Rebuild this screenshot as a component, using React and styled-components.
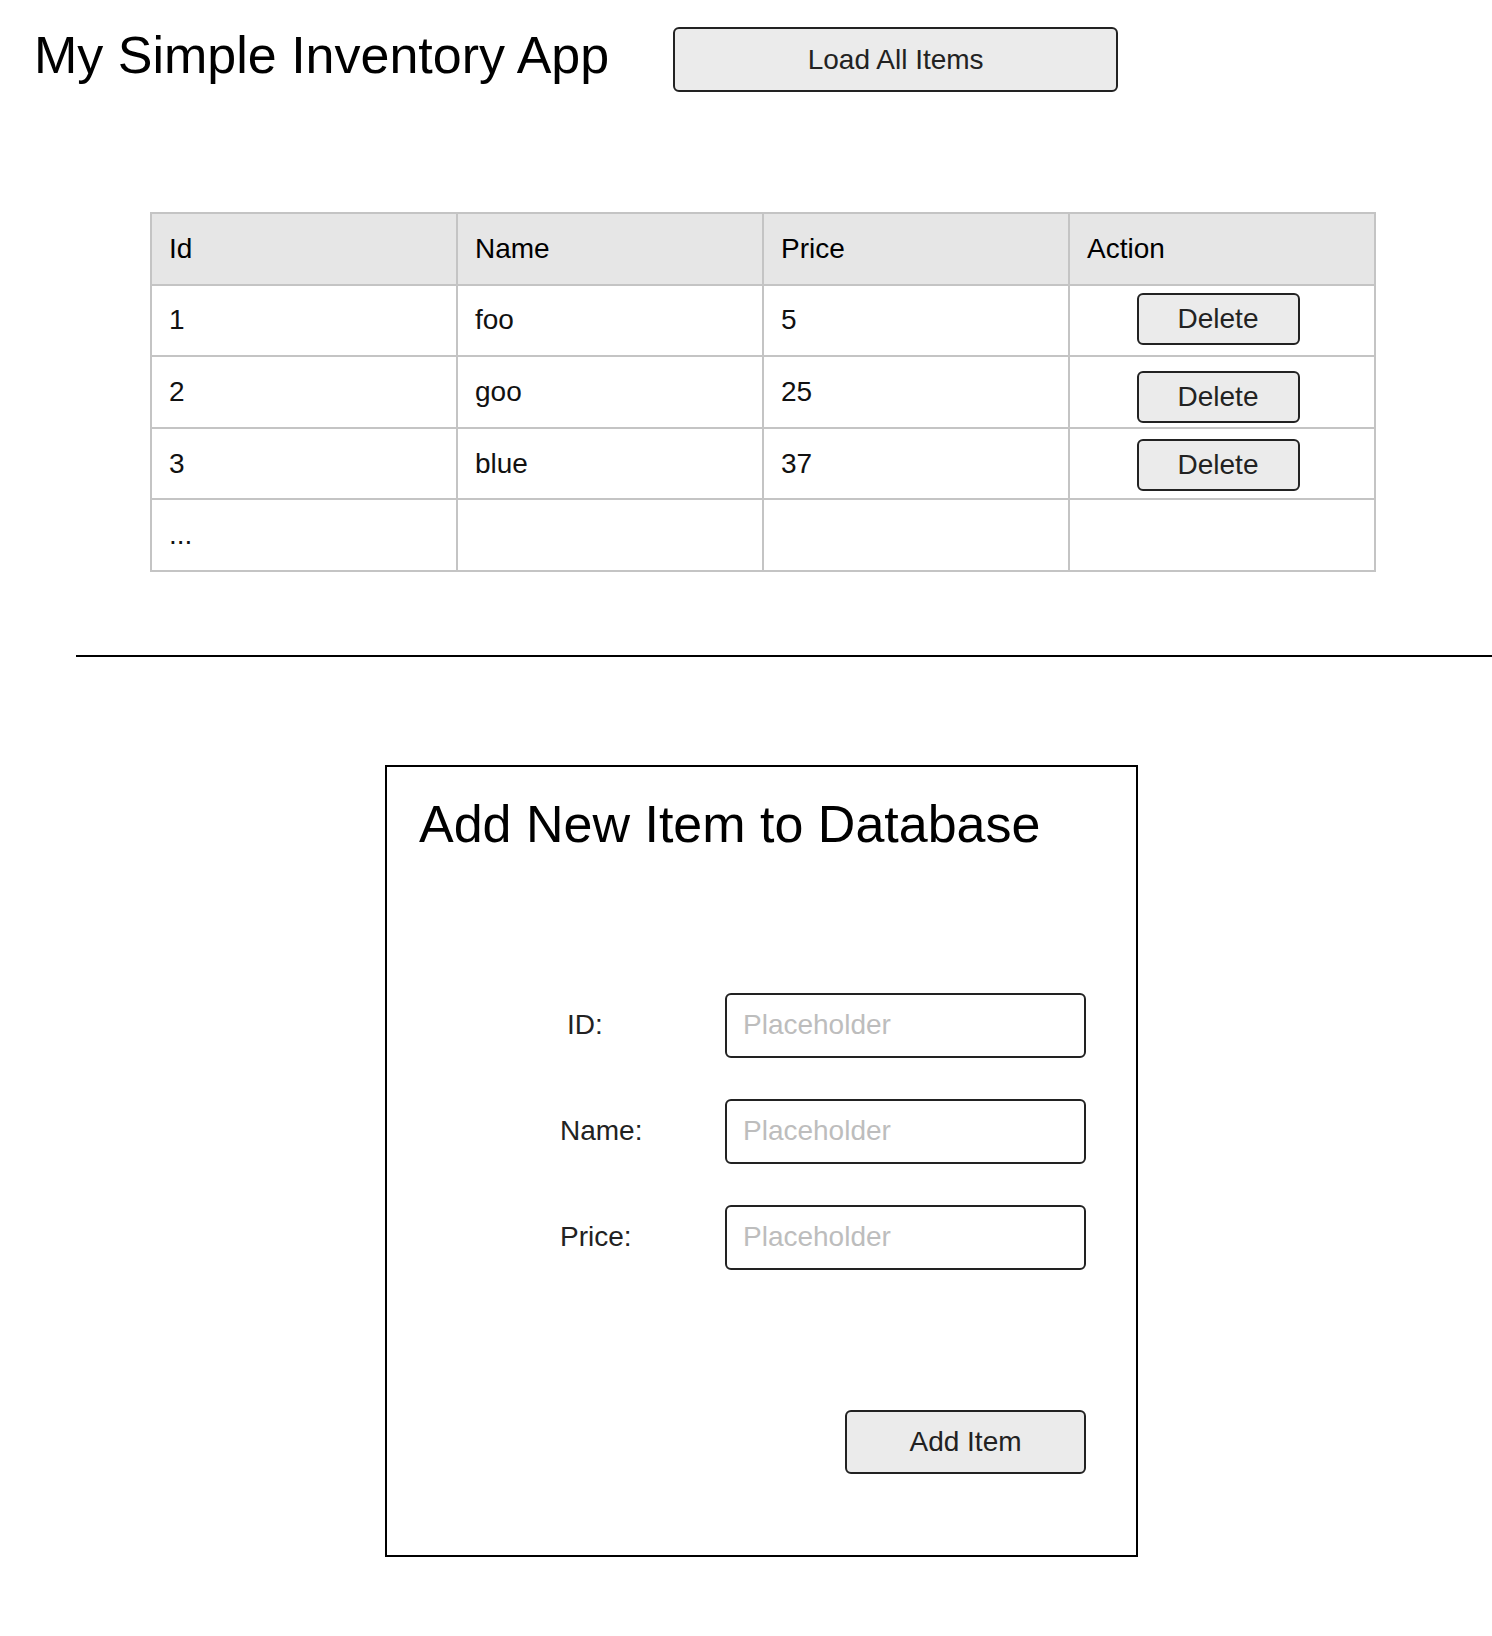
import React from "react";
import styled, { createGlobalStyle } from "styled-components";

const GlobalStyle = createGlobalStyle`
  body {
    margin: 0;
    background: #ffffff;
    font-family: "Liberation Sans", Arial, sans-serif;
    color: #111111;
  }
`;

const Page = styled.div`
  padding-bottom: 80px;
`;

const TopBar = styled.header`
  display: flex;
  align-items: flex-start;
  padding-left: 34px;
`;

const Title = styled.h1`
  margin: 25px 0 0;
  font-size: 52px;
  font-weight: normal;
  color: #000000;
`;

const GreyButton = styled.button`
  box-sizing: border-box;
  width: ${(p) => p.$width}px;
  height: ${(p) => p.$height}px;
  background: #ebebeb;
  border: 2px solid #222222;
  border-radius: 6px;
  font-family: "Liberation Sans", Arial, sans-serif;
  font-size: 28px;
  color: #222222;
  cursor: pointer;
  padding: 0;
`;

const LoadButton = styled(GreyButton)`
  margin: 27px 0 0 64px;
`;

const ItemsTable = styled.table`
  margin: 120px 0 0 150px;
  width: 1226px;
  table-layout: fixed;
  border-collapse: collapse;
  border: 2px solid #c4c4c4;
  font-size: 28px;
`;

const HeadCell = styled.th`
  height: 69.6px;
  padding: 0 17px;
  background: #e6e6e6;
  border: 2px solid #c4c4c4;
  text-align: left;
  font-weight: normal;
  color: #000000;
`;

const Cell = styled.td`
  height: 69.6px;
  padding: ${(p) => (p.$center ? "0 25px 0 17px" : "0 17px")};
  border: 2px solid #c4c4c4;
  text-align: ${(p) => (p.$center ? "center" : "left")};
  vertical-align: middle;
  color: #111111;
`;

const DeleteButton = styled(GreyButton)`
  display: block;
  margin: ${(p) => p.$nudge * 2}px auto 0;
`;

const Divider = styled.hr`
  margin: 83px 0 0 76px;
  border: 0;
  border-top: 2px solid #000000;
`;

const FormBox = styled.section`
  box-sizing: border-box;
  width: 753px;
  margin: 108px 0 0 385px;
  padding: 27px 50px 81px 32px;
  border: 2px solid #000000;
`;

const FormTitle = styled.h2`
  margin: 0;
  font-size: 52px;
  font-weight: normal;
  color: #000000;
`;

const Fields = styled.div`
  display: grid;
  grid-template-columns: 165px 361px;
  row-gap: 41px;
  align-items: center;
  margin: 139px 0 0 141px;
`;

const Label = styled.label`
  font-size: 28px;
  color: #222222;
  padding-left: ${(p) => p.$indent || 0}px;
`;

const TextInput = styled.input`
  box-sizing: border-box;
  width: 361px;
  height: 65px;
  padding: 0 16px;
  border: 2px solid #222222;
  border-radius: 6px;
  font-family: "Liberation Sans", Arial, sans-serif;
  font-size: 28px;
  color: #222222;
  outline: none;

  &::placeholder {
    color: #bdbdbd;
  }
`;

const Actions = styled.div`
  display: flex;
  justify-content: flex-end;
  margin-top: 140px;
`;

const items = [
  { id: 1, name: "foo", price: 5, nudge: -1 },
  { id: 2, name: "goo", price: 25, nudge: 5 },
  { id: 3, name: "blue", price: 37, nudge: 1 },
];

const fields = [
  { key: "id", label: "ID:", indent: 7 },
  { key: "name", label: "Name:" },
  { key: "price", label: "Price:" },
];

function App() {
  return (
    <Page>
      <GlobalStyle />
      <TopBar>
        <Title>My Simple Inventory App</Title>
        <LoadButton $width={445} $height={65}>
          Load All Items
        </LoadButton>
      </TopBar>

      <ItemsTable>
        <thead>
          <tr>
            <HeadCell>Id</HeadCell>
            <HeadCell>Name</HeadCell>
            <HeadCell>Price</HeadCell>
            <HeadCell>Action</HeadCell>
          </tr>
        </thead>
        <tbody>
          {items.map(({ id, name, price, nudge }) => (
            <tr key={id}>
              <Cell>{id}</Cell>
              <Cell>{name}</Cell>
              <Cell>{price}</Cell>
              <Cell $center>
                <DeleteButton $width={163} $height={52} $nudge={nudge}>
                  Delete
                </DeleteButton>
              </Cell>
            </tr>
          ))}
          <tr>
            <Cell>...</Cell>
            <Cell />
            <Cell />
            <Cell />
          </tr>
        </tbody>
      </ItemsTable>

      <Divider />

      <FormBox>
        <FormTitle>Add New Item to Database</FormTitle>
        <Fields>
          {fields.map(({ key, label, indent }) => (
            <React.Fragment key={key}>
              <Label htmlFor={key} $indent={indent}>
                {label}
              </Label>
              <TextInput id={key} placeholder="Placeholder" />
            </React.Fragment>
          ))}
        </Fields>
        <Actions>
          <GreyButton $width={241} $height={64}>
            Add Item
          </GreyButton>
        </Actions>
      </FormBox>
    </Page>
  );
}

export default App;
